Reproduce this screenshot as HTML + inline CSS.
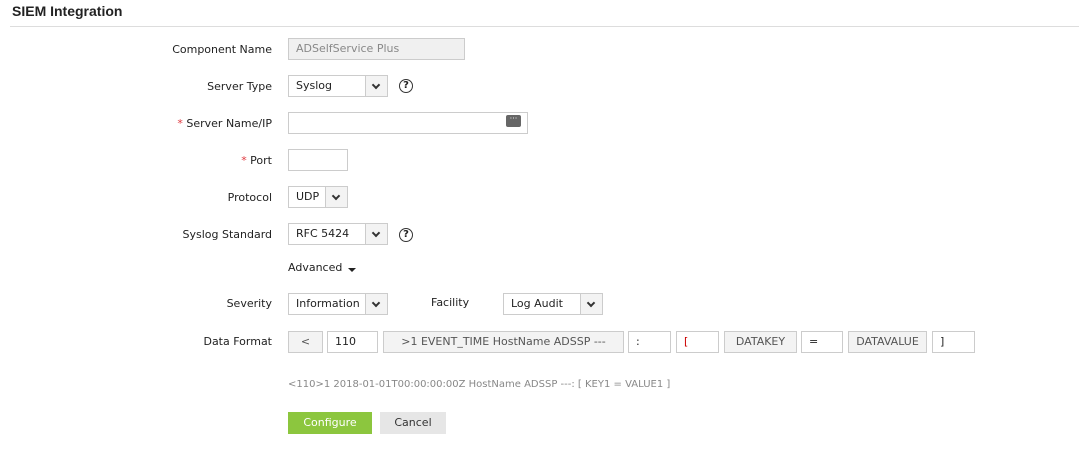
<!DOCTYPE html>
<html><head><meta charset="utf-8"><style>
body{margin:0;width:1079px;height:455px;background:#fff;position:relative;font-family:"DejaVu Sans",Verdana,sans-serif;font-size:11px;color:#222;overflow:hidden}
.a{position:absolute}
.lbl{position:absolute;right:807px;text-align:right;white-space:nowrap;line-height:14px}
.req{color:#e0383e}
.box{position:absolute;border:1px solid #ccc;box-sizing:border-box;background:#fff;height:22px;line-height:20px;padding-left:7px;white-space:nowrap}
.sel .dd{position:absolute;right:0;top:0;bottom:0;width:21px;border-left:1px solid #ccc;background:#f3f3f3}
.dd:after{content:"";position:absolute;left:7px;top:6px;width:4px;height:4px;border-right:2px solid #333;border-bottom:2px solid #333;transform:rotate(45deg)}
.g{background:#f3f3f3;color:#555;text-align:center;padding:0}
.w{text-align:left}
.help{position:absolute;width:12px;height:12px;border:1.3px solid #333;border-radius:50%;font-size:10px;line-height:12px;text-align:center;font-weight:bold}
</style></head><body>
<div class="a" style="left:12px;top:3px;font-family:'Liberation Sans',Arial,sans-serif;font-weight:bold;font-size:14px">SIEM Integration</div>
<div class="a" style="left:10px;top:26px;width:1069px;height:1px;background:#ddd"></div>

<div class="lbl" style="top:43px">Component Name</div>
<div class="box" style="left:288px;top:38px;width:177px;background:#f0f0f0;color:#888">ADSelfService Plus</div>

<div class="lbl" style="top:80px">Server Type</div>
<div class="box sel" style="left:288px;top:75px;width:100px">Syslog<span class="dd"></span></div>
<div class="help" style="left:399px;top:79px">?</div>

<div class="lbl" style="top:117px"><span class="req">*</span> Server Name/IP</div>
<div class="box" style="left:288px;top:112px;width:240px"></div>
<div class="a" style="left:506px;top:115px;width:15px;height:12px;background:#666;border-radius:2px;color:#fff;font-size:8px;line-height:8px;text-align:center">···</div>

<div class="lbl" style="top:154px"><span class="req">*</span> Port</div>
<div class="box" style="left:288px;top:149px;width:60px"></div>

<div class="lbl" style="top:191px">Protocol</div>
<div class="box sel" style="left:288px;top:186px;width:60px">UDP<span class="dd"></span></div>

<div class="lbl" style="top:228px">Syslog Standard</div>
<div class="box sel" style="left:288px;top:223px;width:100px">RFC 5424<span class="dd"></span></div>
<div class="help" style="left:399px;top:228px">?</div>

<div class="a" style="left:288px;top:261px">Advanced</div>
<div class="a" style="left:348px;top:268px;width:0;height:0;border-left:4px solid transparent;border-right:4px solid transparent;border-top:4px solid #222"></div>

<div class="lbl" style="top:297px">Severity</div>
<div class="box sel" style="left:288px;top:293px;width:100px">Information<span class="dd"></span></div>
<div class="a" style="left:431px;top:296px">Facility</div>
<div class="box sel" style="left:503px;top:293px;width:100px">Log Audit<span class="dd"></span></div>

<div class="lbl" style="top:335px">Data Format</div>
<div class="box g" style="left:288px;top:331px;width:35px">&lt;</div>
<div class="box w" style="left:327px;top:331px;width:51px">110</div>
<div class="box g" style="left:383px;top:331px;width:241px">&gt;1 EVENT_TIME HostName ADSSP ---</div>
<div class="box w" style="left:628px;top:331px;width:43px">:</div>
<div class="box w" style="left:676px;top:331px;width:43px;color:#c00">[</div>
<div class="box g" style="left:724px;top:331px;width:73px">DATAKEY</div>
<div class="box w" style="left:801px;top:331px;width:42px">=</div>
<div class="box g" style="left:848px;top:331px;width:79px">DATAVALUE</div>
<div class="box w" style="left:932px;top:331px;width:43px">]</div>

<div class="a" style="left:288px;top:379px;font-size:10px;color:#888">&lt;110&gt;1 2018-01-01T00:00:00:00Z HostName ADSSP ---: [ KEY1 = VALUE1 ]</div>

<div class="a" style="left:288px;top:412px;width:84px;height:22px;background:#8cc63e;color:#fff;text-align:center;line-height:22px">Configure</div>
<div class="a" style="left:380px;top:412px;width:66px;height:22px;background:#e6e6e6;color:#333;text-align:center;line-height:22px">Cancel</div>
</body></html>
